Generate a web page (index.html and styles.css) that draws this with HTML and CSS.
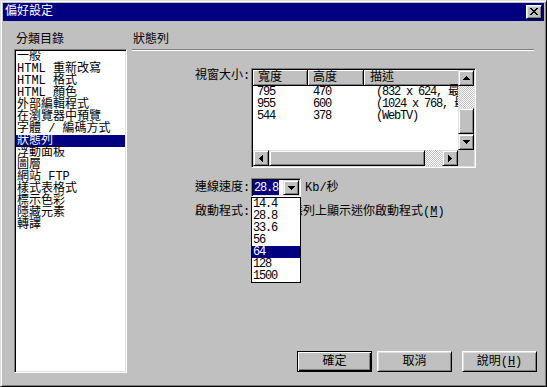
FILE: index.html
```html
<!DOCTYPE html>
<html lang="zh-Hant">
<head>
    <meta charset="UTF-8">
    <meta name="viewport" content="width=device-width, initial-scale=1.0">
    <title>偏好設定</title>
    <link rel="stylesheet" href="styles.css">
</head>
<body>
    <div id="janela">
        <div class="barra-titulo">
            <span>偏好設定</span>
            <div class="btn-fechar">
                <svg width="8" height="7" viewBox="0 0 8 7" shape-rendering="crispEdges"><path d="M0 0h2v1H0zM6 0h2v1H6zM1 1h2v1H1zM5 1h2v1H5zM2 2h4v1H2zM3 3h2v1H3zM2 4h4v1H2zM1 5h2v1H1zM5 5h2v1H5zM0 6h2v1H0zM6 6h2v1H6z"/></svg>
            </div>
        </div>

        <div class="conteudo">
            <!-- categorias -->
            <div class="col-categorias">
                <div class="rotulo">分類目錄</div>
                <ul class="lista">
                    <li>一般</li>
                    <li>HTML 重新改寫</li>
                    <li>HTML 格式</li>
                    <li>HTML 顏色</li>
                    <li>外部編輯程式</li>
                    <li>在瀏覽器中預覽</li>
                    <li>字體 / 編碼方式</li>
                    <li class="ativo">狀態列</li>
                    <li>浮動面板</li>
                    <li>圖層</li>
                    <li>網站 FTP</li>
                    <li>樣式表格式</li>
                    <li>標示色彩</li>
                    <li>隱藏元素</li>
                    <li>轉譯</li>
                </ul>
            </div>

            <!-- painel da direita -->
            <div class="col-painel">
                <div class="titulo-painel">狀態列</div>
                <div class="sulco"></div>

                <div class="campo campo-janela">
                    <span class="nome-campo">視窗大小:</span>
                    <div class="tabela">
                        <div class="tab-dados">
                            <div class="tab-cab">
                                <div class="c1">寬度</div>
                                <div class="c2">高度</div>
                                <div class="c3">描述</div>
                            </div>
                            <div class="tab-linha"><span class="c1">795</span><span class="c2">470</span><span class="c3">(832 x 624, 最大化)</span></div>
                            <div class="tab-linha"><span class="c1">955</span><span class="c2">600</span><span class="c3">(1024 x 768, 最大化)</span></div>
                            <div class="tab-linha"><span class="c1">544</span><span class="c2">378</span><span class="c3">(WebTV)</span></div>
                        </div>
                        <div class="vscroll">
                            <div class="sb-btn"><svg width="7" height="4" viewBox="0 0 7 4" shape-rendering="crispEdges"><path d="M3 0h1v1H3zM2 1h3v1H2zM1 2h5v1H1zM0 3h7v1H0z"/></svg></div>
                            <div class="trilho v1"></div>
                            <div class="sb-btn polegar-v"></div>
                            <div class="sb-btn"><svg width="7" height="4" viewBox="0 0 7 4" shape-rendering="crispEdges"><path d="M0 0h7v1H0zM1 1h5v1H1zM2 2h3v1H2zM3 3h1v1H3z"/></svg></div>
                        </div>
                        <div class="hscroll">
                            <div class="sb-btn"><svg width="4" height="7" viewBox="0 0 4 7" shape-rendering="crispEdges"><path d="M3 0h1v7H3zM2 1h1v5H2zM1 2h1v3H1zM0 3h1v1H0z"/></svg></div>
                            <div class="sb-btn polegar-h"></div>
                            <div class="trilho h1"></div>
                            <div class="sb-btn"><svg width="4" height="7" viewBox="0 0 4 7" shape-rendering="crispEdges"><path d="M0 0h1v7H0zM1 1h1v5H1zM2 2h1v3H2zM3 3h1v1H3z"/></svg></div>
                        </div>
                        <div class="canto"></div>
                    </div>
                </div>

                <div class="campo campo-velocidade">
                    <span class="nome-campo">連線速度:</span>
                    <div class="combo">
                        <div class="combo-valor"><span>28.8</span></div>
                        <div class="sb-btn btn-seta"><svg width="7" height="4" viewBox="0 0 7 4" shape-rendering="crispEdges"><path d="M0 0h7v1H0zM1 1h5v1H1zM2 2h3v1H2zM3 3h1v1H3z"/></svg></div>
                    </div>
                    <span class="unidade">Kb/秒</span>
                    <ul class="lista-suspensa">
                        <li>14.4</li>
                        <li>28.8</li>
                        <li>33.6</li>
                        <li>56</li>
                        <li class="ativo">64</li>
                        <li>128</li>
                        <li>1500</li>
                    </ul>
                </div>

                <div class="campo campo-inicio">
                    <span class="nome-campo">啟動程式:</span>
                    <span class="caixa"></span>
                    <span>在狀態列上顯示迷你啟動程式(<u>M</u>)</span>
                </div>

                <div class="botoes">
                    <button class="btn padrao">確定</button>
                    <button class="btn">取消</button>
                    <button class="btn ajuda">說明(<u>H</u>)</button>
                </div>
            </div>
        </div>
    </div>
</body>
</html>
```

FILE: styles.css
```css
* {
    box-sizing: border-box;
}

html, body {
    margin: 0;
}

body {
    background-color: #c0c0c0;
    font-family: "Liberation Mono", "Noto Sans CJK TC", monospace;
    font-size: 12px;
    line-height: 12px;
    color: #000;
}

/*janela*/
#janela {
    width: 547px;
    height: 387px;
    display: flex;
    flex-direction: column;
    padding: 2px;
    border: 1px solid;
    border-color: #dfdfdf #000 #000 #dfdfdf;
    box-shadow: inset 1px 1px #fff, inset -1px -1px #808080;
}

.barra-titulo {
    height: 18px;
    background-color: #000080;
    color: #fff;
    display: flex;
    align-items: center;
    justify-content: space-between;
    padding: 0 2px;
}

.btn-fechar {
    width: 16px;
    height: 14px;
    background-color: #c0c0c0;
    border: 1px solid;
    border-color: #fff #000 #000 #fff;
    box-shadow: inset 1px 1px #dfdfdf, inset -1px -1px #808080;
    display: flex;
    align-items: center;
    justify-content: center;
}

.btn-fechar svg {
    margin-top: -1px;
}

.conteudo {
    flex: 1;
    display: flex;
    gap: 5px;
    padding: 13px 7px 11px 11px;
}

/*lista de categorias*/
.col-categorias {
    width: 113px;
    display: flex;
    flex-direction: column;
}

.rotulo {
    padding-left: 2px;
    margin-bottom: 3px;
}

.lista {
    flex: 1;
    margin: 0;
    padding: 1px;
    list-style: none;
    background-color: #fff;
    border: 1px solid;
    border-color: #808080 #fff #fff #808080;
    box-shadow: inset 1px 1px #000, inset -1px -1px #dfdfdf;
}

.lista li {
    height: 12px;
    padding-left: 1px;
    white-space: nowrap;
}

.ativo {
    background-color: #000080;
    color: #fff;
}

/*painel*/
.col-painel {
    flex: 1;
    display: flex;
    flex-direction: column;
}

.titulo-painel {
    padding-left: 1px;
}

.sulco {
    margin: 3px 3px 0 0;
    border-top: 1px solid #808080;
    border-bottom: 1px solid #fff;
}

.campo {
    display: flex;
    padding-left: 63px;
}

.nome-campo {
    width: 56px;
    flex-shrink: 0;
}

.campo-janela {
    margin-top: 17px;
}

.campo-janela .nome-campo {
    padding-top: 2px;
}

/*tabela com barras de rolagem*/
.tabela {
    width: 225px;
    height: 100px;
    padding: 1px;
    background-color: #fff;
    border: 1px solid;
    border-color: #808080 #fff #fff #808080;
    box-shadow: inset 1px 1px #000, inset -1px -1px #dfdfdf;
    display: grid;
    grid-template-columns: 205px 16px;
    grid-template-rows: 80px 16px;
}

.tab-dados {
    overflow: hidden;
}

.tab-cab {
    display: flex;
    height: 16px;
}

.tab-cab div {
    flex-shrink: 0;
    height: 16px;
    padding: 2px 0 0 5px;
    background-color: #c0c0c0;
    border-right: 1px solid #000;
    border-bottom: 1px solid #000;
    box-shadow: inset 1px 1px #fff, inset -1px -1px #808080;
}

.tab-linha {
    display: flex;
    height: 12px;
    white-space: nowrap;
    letter-spacing: -1.2px;
}

.c1 {
    width: 55px;
    flex-shrink: 0;
    padding-left: 4px;
}

.c2 {
    width: 56px;
    flex-shrink: 0;
    padding-left: 5px;
}

.c3 {
    width: 120px;
    flex-shrink: 0;
    padding-left: 12px;
}

.tab-cab .c3 {
    padding-left: 6px;
}

.vscroll {
    display: flex;
    flex-direction: column;
}

.hscroll {
    display: flex;
}

.sb-btn {
    width: 16px;
    height: 16px;
    flex-shrink: 0;
    background-color: #c0c0c0;
    border: 1px solid;
    border-color: #dfdfdf #000 #000 #dfdfdf;
    box-shadow: inset 1px 1px #fff, inset -1px -1px #808080;
    display: flex;
    align-items: center;
    justify-content: center;
}

.trilho {
    background-image: conic-gradient(#fff 25%, #c0c0c0 0 50%, #fff 0 75%, #c0c0c0 0);
    background-size: 2px 2px;
}

.v1 {
    height: 22px;
}

.polegar-v {
    height: 26px;
}

.polegar-h {
    width: 156px;
}

.h1 {
    width: 17px;
}

.canto {
    background-color: #c0c0c0;
}

/*velocidade*/
.campo-velocidade {
    margin-top: 10px;
    align-items: center;
    position: relative;
}

.combo {
    width: 50px;
    height: 19px;
    padding: 1px;
    display: flex;
    background-color: #fff;
    border: 1px solid;
    border-color: #808080 #fff #fff #808080;
    box-shadow: inset 1px 1px #000, inset -1px -1px #dfdfdf;
}

.combo-valor {
    flex: 1;
}

.combo-valor span {
    display: inline-block;
    height: 15px;
    padding: 2px 1px 0 1px;
    background-color: #000080;
    color: #fff;
    letter-spacing: -1.2px;
}

.btn-seta {
    height: 15px;
}

.unidade {
    margin-left: 4px;
}

.lista-suspensa {
    position: absolute;
    left: 119px;
    top: 19px;
    z-index: 2;
    width: 50px;
    margin: 0;
    padding: 0;
    list-style: none;
    background-color: #fff;
    border: 1px solid #000;
}

.lista-suspensa li {
    height: 12px;
    padding-left: 1px;
    letter-spacing: -1.2px;
}

/*inicio*/
.campo-inicio {
    margin-top: 8px;
    align-items: center;
}

.caixa {
    width: 13px;
    height: 13px;
    margin-right: 3px;
    background-color: #fff;
    border: 1px solid;
    border-color: #808080 #fff #fff #808080;
    box-shadow: inset 1px 1px #000, inset -1px -1px #dfdfdf;
}

.campo-inicio u {
    text-underline-offset: 1px;
}

/*botoes*/
.botoes {
    margin-top: auto;
    padding-bottom: 1px;
    display: flex;
    justify-content: flex-end;
    gap: 5px;
}

.btn {
    width: 75px;
    height: 21px;
    padding: 0;
    font: inherit;
    color: #000;
    background-color: #c0c0c0;
    border: 1px solid;
    border-color: #fff #000 #000 #fff;
    box-shadow: inset 1px 1px #dfdfdf, inset -1px -1px #808080;
}

.padrao {
    border-color: #000;
    box-shadow: inset 1px 1px #fff, inset -1px -1px #000, inset -2px -2px #808080;
}

.ajuda {
    margin-left: 5px;
}
```
